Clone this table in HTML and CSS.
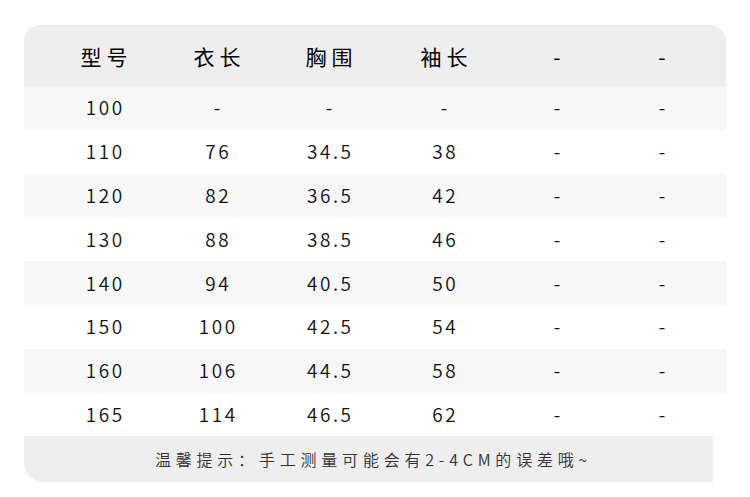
FILE: index.html
```html
<!DOCTYPE html>
<html lang="zh">
<head>
<meta charset="utf-8">
<link rel="stylesheet" href="styles.css">
</head>
<body>
<div class="card">
  <div class="row head">
    <span>型号</span><span>衣长</span><span>胸围</span><span>袖长</span><span>-</span><span>-</span>
  </div>
  <div class="row alt"><span>100</span><span>-</span><span>-</span><span>-</span><span>-</span><span>-</span></div>
  <div class="row"><span>110</span><span>76</span><span>34.5</span><span>38</span><span>-</span><span>-</span></div>
  <div class="row alt"><span>120</span><span>82</span><span>36.5</span><span>42</span><span>-</span><span>-</span></div>
  <div class="row"><span>130</span><span>88</span><span>38.5</span><span>46</span><span>-</span><span>-</span></div>
  <div class="row alt"><span>140</span><span>94</span><span>40.5</span><span>50</span><span>-</span><span>-</span></div>
  <div class="row"><span>150</span><span>100</span><span>42.5</span><span>54</span><span>-</span><span>-</span></div>
  <div class="row alt"><span>160</span><span>106</span><span>44.5</span><span>58</span><span>-</span><span>-</span></div>
  <div class="row"><span>165</span><span>114</span><span>46.5</span><span>62</span><span>-</span><span>-</span></div>
  <div class="note">温馨提示：手工测量可能会有2-4CM的误差哦~</div>
</div>
</body>
</html>
```
FILE: styles.css
```css
html, body {
  margin: 0;
  padding: 0;
  background: #ffffff;
}
body {
  font-family: "Noto Sans CJK SC", "Noto Sans", sans-serif;
  color: #222;
}
.card {
  width: 702px;
  margin: 25px 0 0 24px;
}
.row {
  display: grid;
  grid-template-columns: 112px 114px 110px 120px 106px 104px;
  padding-left: 24px;
  height: 43.8px;
  align-items: center;
  font-size: 19px;
  font-weight: 350;
  letter-spacing: 2.5px;
  color: #111;
}
.row span {
  text-align: center;
  padding-left: 2.5px;
  padding-bottom: 2px;
}
.row.alt {
  background: #f7f7f7;
}
.row.head {
  height: 61px;
  background: #eeeeee;
  border-radius: 16px 16px 0 0;
  font-size: 21px;
  font-weight: 400;
  letter-spacing: 5px;
  color: #000;
}
.row.head span {
  padding-left: 5px;
  padding-bottom: 0;
}
.note {
  width: 689px;
  height: 46px;
  background: #eeeeee;
  border-radius: 0 0 0 20px;
  display: flex;
  align-items: center;
  justify-content: center;
  font-size: 16px;
  font-weight: 350;
  letter-spacing: 4.8px;
  color: #333;
  padding-left: 10px;
  box-sizing: border-box;
}
```
